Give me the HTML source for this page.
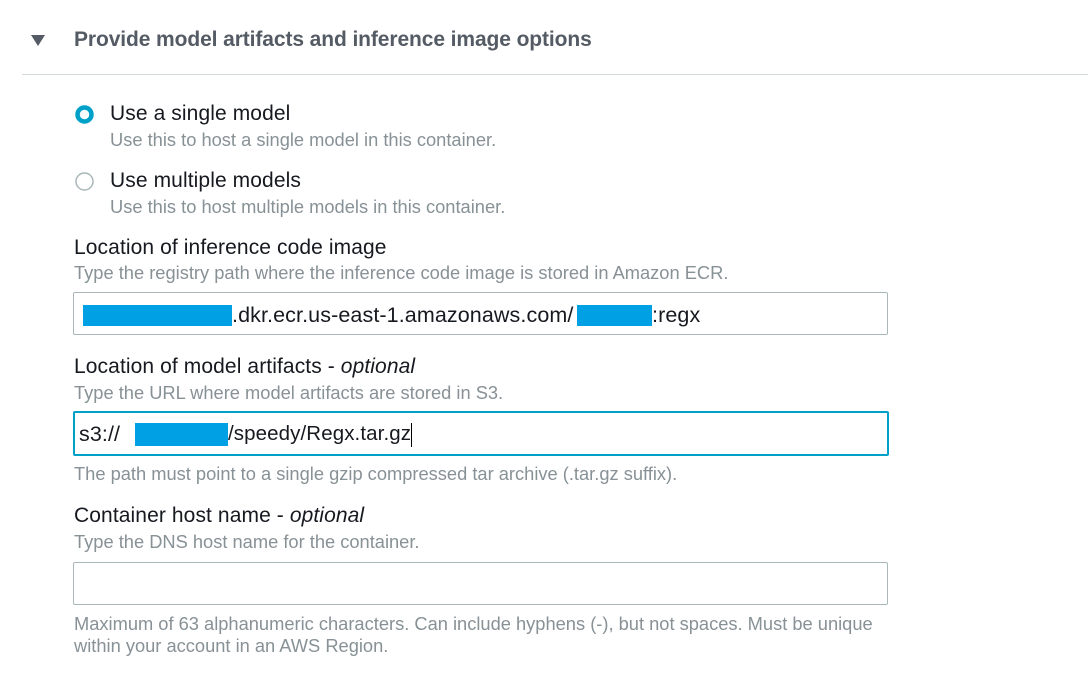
<!DOCTYPE html>
<html><head><meta charset="utf-8"><style>
body{margin:0;width:1088px;height:690px;background:#fff;font-family:"Liberation Sans",sans-serif;position:relative;overflow:hidden}
.a{position:absolute;white-space:nowrap}
.h{font-weight:bold;font-size:21px;line-height:24px;color:#545b64;letter-spacing:-0.1px}
.l{font-size:21px;line-height:24px;color:#16191f;letter-spacing:0.1px}
.d{font-size:18.3px;line-height:20px;color:#879196;letter-spacing:0px}
.in{position:absolute;left:73px;width:813px;height:41px;border:1px solid #aab7b8;border-radius:2px;box-sizing:content-box}
.b{position:absolute;background:#00a1e4}
.t{font-size:21.5px;line-height:24px;color:#16191f;letter-spacing:0.1px}
</style></head><body>
<svg class="a" style="left:30px;top:34px" width="16" height="12"><polygon points="1,1 15,1 8,12" fill="#545b64"/></svg>
<div class="a h" style="left:74px;top:28px">Provide model artifacts and inference image options</div>
<div class="a" style="left:22px;top:74px;width:1066px;height:1px;background:#d5dbdb"></div>
<svg class="a" style="left:75px;top:105px" width="20" height="20"><circle cx="9.5" cy="9.5" r="7" fill="#fff" stroke="#00a1c9" stroke-width="4.5"/></svg>
<div class="a l" style="left:110px;top:102px">Use a single model</div>
<div class="a d" style="left:110px;top:130px">Use this to host a single model in this container.</div>
<svg class="a" style="left:75px;top:172px" width="20" height="20"><circle cx="9.5" cy="9.5" r="8.5" fill="#fff" stroke="#aab7b8" stroke-width="1.5"/></svg>
<div class="a l" style="left:110px;top:169px">Use multiple models</div>
<div class="a d" style="left:110px;top:197px">Use this to host multiple models in this container.</div>
<div class="a l" style="left:74px;top:236px">Location of inference code image</div>
<div class="a d" style="left:74px;top:263px">Type the registry path where the inference code image is stored in Amazon ECR.</div>
<div class="in" style="top:292px"></div>
<div class="b" style="left:83px;top:305px;width:149px;height:21px"></div>
<div class="a t" style="left:232px;top:303px">.dkr.ecr.us-east-1.amazonaws.com/</div>
<div class="b" style="left:577px;top:305px;width:75px;height:21px"></div>
<div class="a t" style="left:652px;top:303px">:regx</div>
<div class="a l" style="left:74px;top:355px">Location of model artifacts - <i>optional</i></div>
<div class="a d" style="left:74px;top:383px">Type the URL where model artifacts are stored in S3.</div>
<div class="in" style="top:411px;height:41px;border:2px solid #00a1c9;width:812px"></div>
<div class="a t" style="left:79px;top:422px">s3://</div>
<div class="b" style="left:135px;top:423px;width:93px;height:23px"></div>
<div class="a t" style="left:228px;top:422px;font-size:20.5px">/speedy/Regx.tar.gz</div>
<div class="a" style="left:411px;top:423px;width:1px;height:24px;background:#000"></div>
<div class="a d" style="left:74px;top:464px">The path must point to a single gzip compressed tar archive (.tar.gz suffix).</div>
<div class="a l" style="left:74px;top:504px">Container host name - <i>optional</i></div>
<div class="a d" style="left:74px;top:532px">Type the DNS host name for the container.</div>
<div class="in" style="top:562px"></div>
<div class="a d" style="left:74px;top:614px">Maximum of 63 alphanumeric characters. Can include hyphens (-), but not spaces. Must be unique</div>
<div class="a d" style="left:74px;top:636px">within your account in an AWS Region.</div>
</body></html>
